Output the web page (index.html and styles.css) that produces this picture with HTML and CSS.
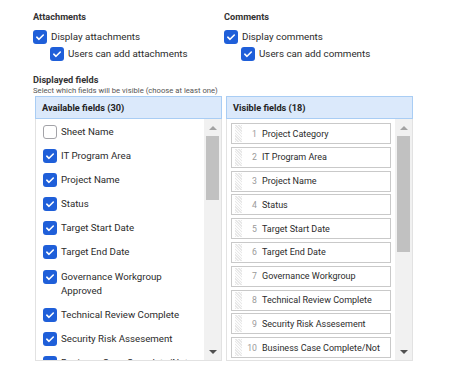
FILE: index.html
```html
<!doctype html>
<html lang="en">
<head>
	<meta charset="utf-8">
	<title>Field settings</title>
	<link rel="stylesheet" href="styles.css">
</head>
<body>
	<div id="frame">
		<div class="options">
			<div class="group">
				<h2>Attachments</h2>
				<label class="check"><span class="cb on"><svg viewBox="0 0 14 14"><path d="M3.8 7.2 6 9.3 10.3 5"/></svg></span>Display attachments</label>
				<label class="check sub"><span class="cb on"><svg viewBox="0 0 14 14"><path d="M3.8 7.2 6 9.3 10.3 5"/></svg></span>Users can add attachments</label>
			</div>
			<div class="group">
				<h2>Comments</h2>
				<label class="check"><span class="cb on"><svg viewBox="0 0 14 14"><path d="M3.8 7.2 6 9.3 10.3 5"/></svg></span>Display comments</label>
				<label class="check sub"><span class="cb on"><svg viewBox="0 0 14 14"><path d="M3.8 7.2 6 9.3 10.3 5"/></svg></span>Users can add comments</label>
			</div>
		</div>

		<h2 class="fields-title">Displayed fields</h2>
		<p class="hint">Select which fields will be visible (choose at least one)</p>

		<div class="fields">
			<div class="panel">
				<div class="panel-head">Available fields (30)</div>
				<div class="panel-body">
					<ul class="avail">
						<li><span class="cb"></span><span>Sheet Name</span></li>
						<li><span class="cb on"><svg viewBox="0 0 14 14"><path d="M3.8 7.2 6 9.3 10.3 5"/></svg></span><span>IT Program Area</span></li>
						<li><span class="cb on"><svg viewBox="0 0 14 14"><path d="M3.8 7.2 6 9.3 10.3 5"/></svg></span><span>Project Name</span></li>
						<li><span class="cb on"><svg viewBox="0 0 14 14"><path d="M3.8 7.2 6 9.3 10.3 5"/></svg></span><span>Status</span></li>
						<li><span class="cb on"><svg viewBox="0 0 14 14"><path d="M3.8 7.2 6 9.3 10.3 5"/></svg></span><span>Target Start Date</span></li>
						<li><span class="cb on"><svg viewBox="0 0 14 14"><path d="M3.8 7.2 6 9.3 10.3 5"/></svg></span><span>Target End Date</span></li>
						<li class="wide"><span class="cb on"><svg viewBox="0 0 14 14"><path d="M3.8 7.2 6 9.3 10.3 5"/></svg></span><span>Governance Workgroup Approved</span></li>
						<li><span class="cb on"><svg viewBox="0 0 14 14"><path d="M3.8 7.2 6 9.3 10.3 5"/></svg></span><span>Technical Review Complete</span></li>
						<li><span class="cb on"><svg viewBox="0 0 14 14"><path d="M3.8 7.2 6 9.3 10.3 5"/></svg></span><span>Security Risk Assesement</span></li>
						<li><span class="cb on"><svg viewBox="0 0 14 14"><path d="M3.8 7.2 6 9.3 10.3 5"/></svg></span><span>Business Case Complete/Not Complete</span></li>
					</ul>
					<div class="scroll">
						<span class="arrow up"></span>
						<span class="thumb short"></span>
						<span class="arrow down"></span>
					</div>
				</div>
			</div>
			<div class="panel">
				<div class="panel-head">Visible fields (18)</div>
				<div class="panel-body">
					<ol class="visible">
						<li><span class="grip"></span><span class="num">1</span><span class="name">Project Category</span></li>
						<li><span class="grip"></span><span class="num">2</span><span class="name">IT Program Area</span></li>
						<li><span class="grip"></span><span class="num">3</span><span class="name">Project Name</span></li>
						<li><span class="grip"></span><span class="num">4</span><span class="name">Status</span></li>
						<li><span class="grip"></span><span class="num">5</span><span class="name">Target Start Date</span></li>
						<li><span class="grip"></span><span class="num">6</span><span class="name">Target End Date</span></li>
						<li><span class="grip"></span><span class="num">7</span><span class="name">Governance Workgroup</span></li>
						<li><span class="grip"></span><span class="num">8</span><span class="name">Technical Review Complete</span></li>
						<li><span class="grip"></span><span class="num">9</span><span class="name">Security Risk Assesement</span></li>
						<li><span class="grip"></span><span class="num">10</span><span class="name">Business Case Complete/Not</span></li>
						<li><span class="grip"></span><span class="num">11</span><span class="name">Owner</span></li>
					</ol>
					<div class="scroll">
						<span class="arrow up"></span>
						<span class="thumb long"></span>
						<span class="arrow down"></span>
					</div>
				</div>
			</div>
		</div>
	</div>
</body>
</html>
```

FILE: styles.css
```css
html {
	box-sizing: border-box;
	font-family: Roboto, "Liberation Sans", Arial, sans-serif;
	font-size: 10px;
	color: #2b2b2b;
}

*,
*:before,
*:after {
	box-sizing: inherit;
}

body,
h2,
p,
ol,
ul {
	margin: 0;
	padding: 0;
}

ol,
ul {
	list-style: none;
}

#frame {
	padding: 10px 0 0 33px;
	width: 420px;
}

h2 {
	font-size: 9.2px;
	line-height: 14px;
	font-weight: bold;
	color: #333;
}

.options {
	display: grid;
	grid-template-columns: 191px 1fr;
}

.check {
	display: flex;
	align-items: center;
	gap: 4px;
	height: 17px;
	font-size: 9.8px;
}

.group h2 {
	margin-bottom: 4px;
}

.check.sub {
	margin-left: 17px;
}

.cb {
	flex-shrink: 0;
	display: inline-block;
	width: 14px;
	height: 14px;
	border-radius: 3px;
	border: 1px solid #a3a3a8;
	background: #fff;
}

.cb.on {
	border: 0;
	background: #1f5fd9;
}

.cb svg {
	display: block;
	width: 14px;
	height: 14px;
	fill: none;
	stroke: #fff;
	stroke-width: 1.6;
	stroke-linecap: round;
	stroke-linejoin: round;
}

.fields-title {
	margin-top: 11px;
}

.hint {
	margin-top: -1px;
	font-size: 7.7px;
	line-height: 10px;
	color: #555;
}

.fields {
	display: flex;
	gap: 4px;
	margin-left: 2px;
}

.panel {
	width: 187px;
}

.panel-head {
	height: 23px;
	padding-left: 6px;
	line-height: 21px;
	font-weight: bold;
	font-size: 9.2px;
	color: #222;
	background: #dbe9fb;
	border: 1px solid #a9cdf4;
}

.panel-body {
	display: flex;
	height: 242px;
	border: 1px solid #e2e2e2;
	border-top: 0;
	overflow: hidden;
}

.avail {
	flex: 1;
	padding: 1px 8px 0 7px;
	overflow: hidden;
}

.avail li {
	display: flex;
	align-items: flex-start;
	gap: 4px;
	padding: 5px 0;
	font-size: 9.7px;
	line-height: 14px;
}

.avail li.wide {
	padding-top: 6px;
}

.visible {
	flex: 1;
	padding: 4px 4px 0 4px;
	overflow: hidden;
}

.visible li {
	display: flex;
	align-items: center;
	height: 21px;
	margin-bottom: 2.8px;
	border: 1px solid #c9c9c9;
	font-size: 9px;
	white-space: nowrap;
	overflow: hidden;
}

.grip {
	flex-shrink: 0;
	width: 7px;
	height: 17px;
	margin-left: 3px;
	background: repeating-linear-gradient(45deg, #e8e8e8 0 1px, #fbfbfb 1px 2px);
}

.num {
	flex-shrink: 0;
	width: 15px;
	margin-right: 5px;
	text-align: right;
	color: #9a9a9a;
	font-size: 8.7px;
}

.name {
	flex-shrink: 0;
}

.scroll {
	flex-shrink: 0;
	width: 17px;
	background: #f1f1f1;
	display: flex;
	flex-direction: column;
	align-items: center;
}

.arrow {
	width: 0;
	height: 0;
	border-left: 4px solid transparent;
	border-right: 4px solid transparent;
}

.arrow.up {
	margin: 7px 0 6px;
	border-bottom: 4px solid #a3a3a3;
}

.arrow.down {
	margin: auto 0 6px;
	border-top: 4px solid #505050;
}

.thumb {
	width: 13px;
	background: #c1c1c1;
}

.thumb.short {
	height: 64px;
}

.thumb.long {
	height: 116px;
}
```
